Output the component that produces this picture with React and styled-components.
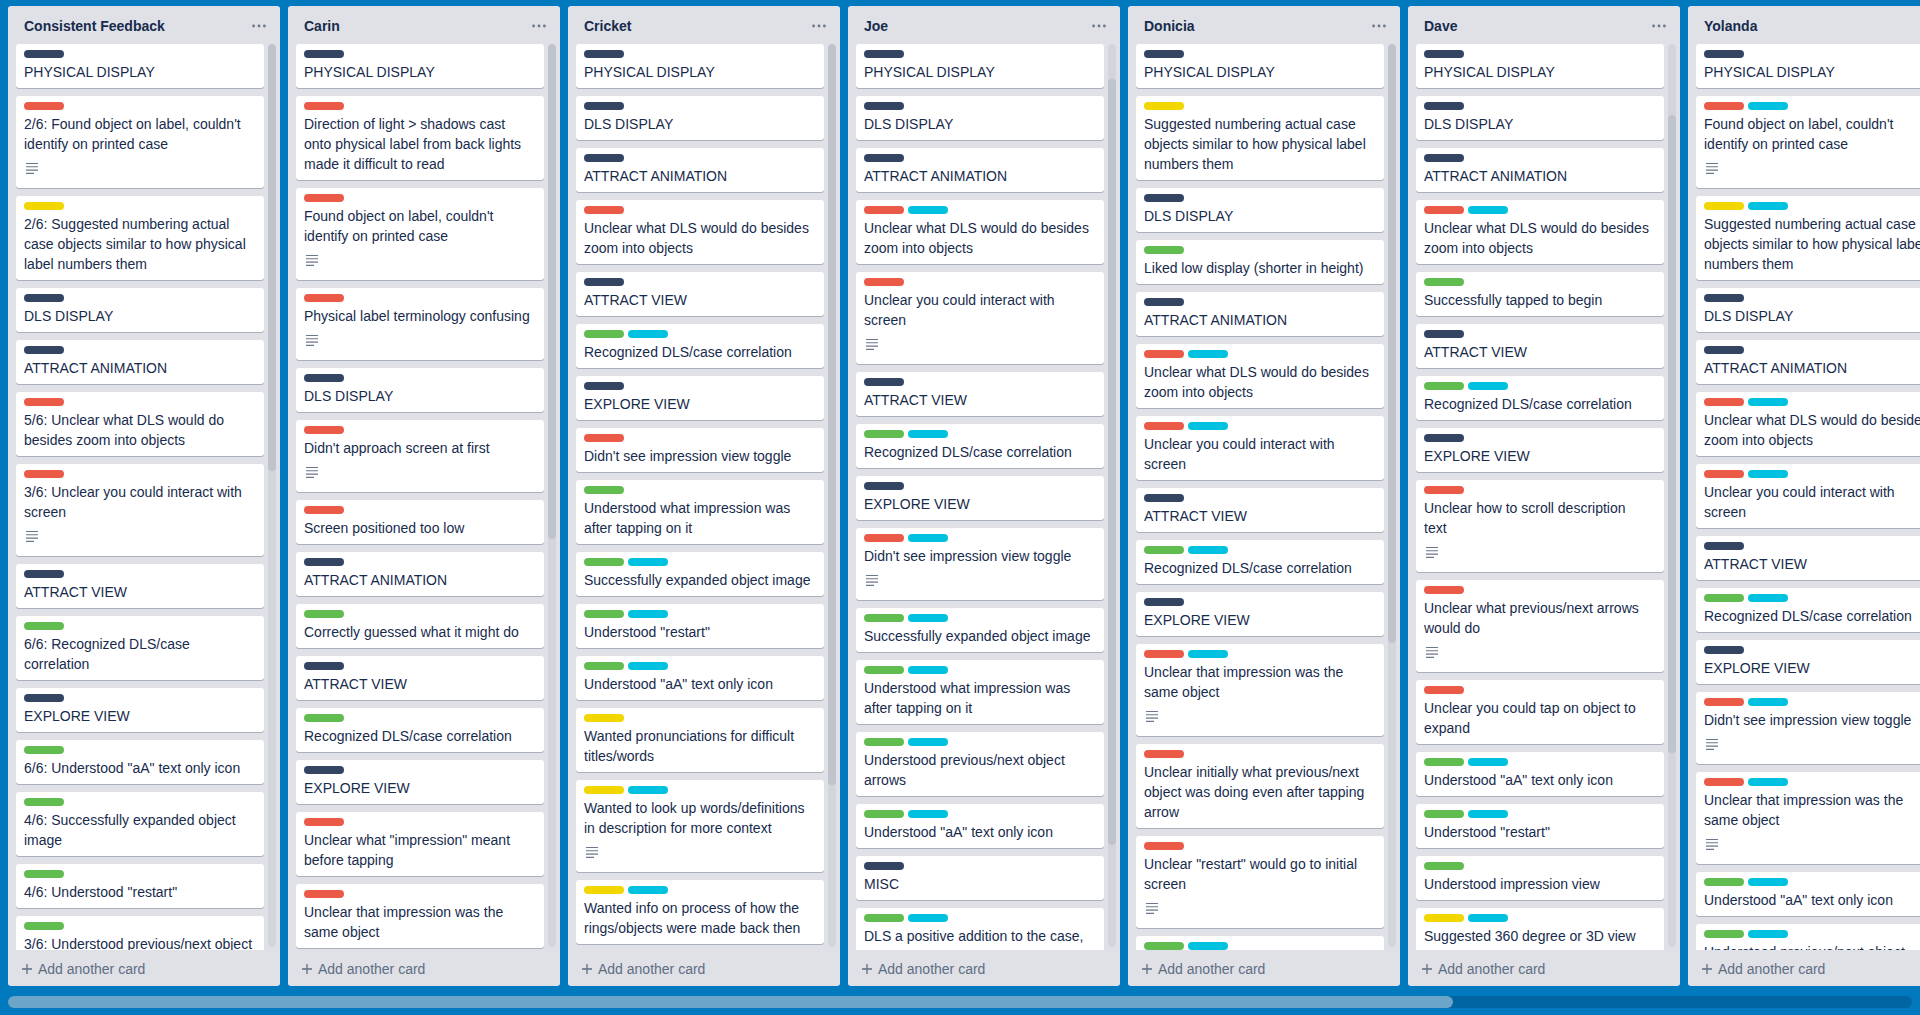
import React from 'react';
import styled, { createGlobalStyle } from 'styled-components';

const GlobalStyle = createGlobalStyle`
  html, body {
    margin: 0;
    padding: 0;
    height: 100%;
    overflow: hidden;
    background: #0079bf;
    font-family: "Liberation Sans", Arial, sans-serif;
  }
  #root {
    height: 100%;
  }
`;

const LABEL_COLORS = {
  d: '#344563',
  r: '#eb5a46',
  y: '#f2d600',
  g: '#61bd4f',
  s: '#00c2e0',
};

// each card: [labels, title, hasDescription]
const lists = [
  {
    name: 'Consistent Feedback',
    thumb: [0, 427],
    cards: [
      ['d', 'PHYSICAL DISPLAY'],
      ['r', "2/6: Found object on label, couldn't identify on printed case", true],
      ['y', '2/6: Suggested numbering actual case objects similar to how physical label numbers them'],
      ['d', 'DLS DISPLAY'],
      ['d', 'ATTRACT ANIMATION'],
      ['r', '5/6: Unclear what DLS would do besides zoom into objects'],
      ['r', '3/6: Unclear you could interact with screen', true],
      ['d', 'ATTRACT VIEW'],
      ['g', '6/6: Recognized DLS/case correlation'],
      ['d', 'EXPLORE VIEW'],
      ['g', '6/6: Understood "aA" text only icon'],
      ['g', '4/6: Successfully expanded object image'],
      ['g', '4/6: Understood "restart"'],
      ['g', '3/6: Understood previous/next object arrows'],
    ],
  },
  {
    name: 'Carin',
    thumb: [0, 495],
    cards: [
      ['d', 'PHYSICAL DISPLAY'],
      ['r', 'Direction of light > shadows cast onto physical label from back lights made it difficult to read'],
      ['r', "Found object on label, couldn't identify on printed case", true],
      ['r', 'Physical label terminology confusing', true],
      ['d', 'DLS DISPLAY'],
      ['r', "Didn't approach screen at first", true],
      ['r', 'Screen positioned too low'],
      ['d', 'ATTRACT ANIMATION'],
      ['g', 'Correctly guessed what it might do'],
      ['d', 'ATTRACT VIEW'],
      ['g', 'Recognized DLS/case correlation'],
      ['d', 'EXPLORE VIEW'],
      ['r', 'Unclear what "impression" meant before tapping'],
      ['r', 'Unclear that impression was the same object'],
    ],
  },
  {
    name: 'Cricket',
    thumb: [0, 741],
    cards: [
      ['d', 'PHYSICAL DISPLAY'],
      ['d', 'DLS DISPLAY'],
      ['d', 'ATTRACT ANIMATION'],
      ['r', 'Unclear what DLS would do besides zoom into objects'],
      ['d', 'ATTRACT VIEW'],
      ['gs', 'Recognized DLS/case correlation'],
      ['d', 'EXPLORE VIEW'],
      ['r', "Didn't see impression view toggle"],
      ['g', 'Understood what impression was after tapping on it'],
      ['gs', 'Successfully expanded object image'],
      ['gs', 'Understood "restart"'],
      ['gs', 'Understood "aA" text only icon'],
      ['y', 'Wanted pronunciations for difficult titles/words'],
      ['ys', 'Wanted to look up words/definitions in description for more context', true],
      ['ys', 'Wanted info on process of how the rings/objects were made back then'],
    ],
  },
  {
    name: 'Joe',
    thumb: [35, 766],
    cards: [
      ['d', 'PHYSICAL DISPLAY'],
      ['d', 'DLS DISPLAY'],
      ['d', 'ATTRACT ANIMATION'],
      ['rs', 'Unclear what DLS would do besides zoom into objects'],
      ['r', 'Unclear you could interact with screen', true],
      ['d', 'ATTRACT VIEW'],
      ['gs', 'Recognized DLS/case correlation'],
      ['d', 'EXPLORE VIEW'],
      ['rs', "Didn't see impression view toggle", true],
      ['gs', 'Successfully expanded object image'],
      ['gs', 'Understood what impression was after tapping on it'],
      ['gs', 'Understood previous/next object arrows'],
      ['gs', 'Understood "aA" text only icon'],
      ['d', 'MISC'],
      ['gs', 'DLS a positive addition to the case, added context to the objects'],
    ],
  },
  {
    name: 'Donicia',
    thumb: [0, 599],
    cards: [
      ['d', 'PHYSICAL DISPLAY'],
      ['y', 'Suggested numbering actual case objects similar to how physical label numbers them'],
      ['d', 'DLS DISPLAY'],
      ['g', 'Liked low display (shorter in height)'],
      ['d', 'ATTRACT ANIMATION'],
      ['rs', 'Unclear what DLS would do besides zoom into objects'],
      ['rs', 'Unclear you could interact with screen'],
      ['d', 'ATTRACT VIEW'],
      ['gs', 'Recognized DLS/case correlation'],
      ['d', 'EXPLORE VIEW'],
      ['rs', 'Unclear that impression was the same object', true],
      ['r', 'Unclear initially what previous/next object was doing even after tapping arrow'],
      ['r', 'Unclear "restart" would go to initial screen', true],
      ['gs', 'Understood "aA" text only icon'],
    ],
  },
  {
    name: 'Dave',
    thumb: [71, 638],
    cards: [
      ['d', 'PHYSICAL DISPLAY'],
      ['d', 'DLS DISPLAY'],
      ['d', 'ATTRACT ANIMATION'],
      ['rs', 'Unclear what DLS would do besides zoom into objects'],
      ['g', 'Successfully tapped to begin'],
      ['d', 'ATTRACT VIEW'],
      ['gs', 'Recognized DLS/case correlation'],
      ['d', 'EXPLORE VIEW'],
      ['r', 'Unclear how to scroll description\ntext', true],
      ['r', 'Unclear what previous/next arrows would do', true],
      ['r', 'Unclear you could tap on object to expand'],
      ['gs', 'Understood "aA" text only icon'],
      ['gs', 'Understood "restart"'],
      ['g', 'Understood impression view'],
      ['ys', 'Suggested 360 degree or 3D view capability'],
    ],
  },
  {
    name: 'Yolanda',
    thumb: [0, 500],
    cards: [
      ['d', 'PHYSICAL DISPLAY'],
      ['rs', "Found object on label, couldn't identify on printed case", true],
      ['ys', 'Suggested numbering actual case objects similar to how physical label numbers them'],
      ['d', 'DLS DISPLAY'],
      ['d', 'ATTRACT ANIMATION'],
      ['rs', 'Unclear what DLS would do besides zoom into objects'],
      ['rs', 'Unclear you could interact with screen'],
      ['d', 'ATTRACT VIEW'],
      ['gs', 'Recognized DLS/case correlation'],
      ['d', 'EXPLORE VIEW'],
      ['rs', "Didn't see impression view toggle", true],
      ['rs', 'Unclear that impression was the same object', true],
      ['gs', 'Understood "aA" text only icon'],
      ['gs', 'Understood previous/next object arrows'],
    ],
  },
];

const Board = styled.div`
  height: 100%;
  display: flex;
  flex-direction: column;
`;

const ListsRow = styled.div`
  flex: 1;
  min-height: 0;
  display: flex;
  gap: 8px;
  padding: 6px 0 0 8px;
  overflow: hidden;
`;

const List = styled.section`
  flex: 0 0 272px;
  display: flex;
  flex-direction: column;
  background: #dfe1e6;
  border-radius: 3px;
`;

const ListHeader = styled.header`
  height: 36px;
  padding: 2px 14px 0 16px;
  display: flex;
  align-items: center;
  justify-content: space-between;
`;

const ListTitle = styled.h2`
  margin: 0;
  font-size: 14px;
  font-weight: 700;
  line-height: 20px;
  color: #172b4d;
`;

const CardsArea = styled.div`
  flex: 1;
  min-height: 0;
  display: flex;
  padding: 0 4px 0 8px;
  gap: 4px;
`;

const CardStack = styled.div`
  width: 248px;
  display: flex;
  flex-direction: column;
  gap: 8px;
  overflow: hidden;
`;

const Track = styled.div`
  position: relative;
  width: 8px;
  margin-bottom: 3px;
  border-radius: 4px;
  background: #d2d6dc;
`;

const Thumb = styled.div`
  position: absolute;
  left: 0;
  right: 0;
  top: ${(p) => p.$top}px;
  height: ${(p) => p.$height}px;
  border-radius: 4px;
  background: #bfc4cc;
`;

const Card = styled.article`
  flex-shrink: 0;
  background: #fff;
  border-radius: 3px;
  box-shadow: 0 1px 0 rgba(9, 30, 66, 0.25);
  padding: 6px 8px 2px;
`;

const Labels = styled.div`
  display: flex;
  gap: 4px;
  margin-bottom: 4px;
`;

const Label = styled.span`
  width: 40px;
  height: 8px;
  border-radius: 4px;
  background: ${(p) => p.$color};
`;

const CardTitle = styled.p`
  margin: 0 0 4px;
  font-size: 14px;
  line-height: 20px;
  color: #172b4d;
  white-space: pre-line;
  word-wrap: break-word;
`;

const Badges = styled.div`
  display: flex;
  margin-bottom: 4px;
`;

const Badge = styled.span`
  display: inline-flex;
  align-items: flex-start;
  height: 20px;
  padding: 2px;
`;

const Footer = styled.button`
  height: 36px;
  display: flex;
  align-items: center;
  gap: 5px;
  padding: 2px 0 0 13px;
  border: 0;
  background: none;
  font-family: inherit;
  font-size: 14px;
  color: #5e6c84;
  text-align: left;
  cursor: pointer;
`;

const HScroll = styled.div`
  position: relative;
  height: 12px;
  margin: 10px 8px 7px;
  border-radius: 6px;
  background: rgba(0, 0, 0, 0.16);
`;

const HThumb = styled.div`
  width: ${(p) => p.$width}px;
  height: 100%;
  border-radius: 6px;
  background: rgba(255, 255, 255, 0.42);
`;

function MoreIcon() {
  return (
    <svg width="14" height="4" viewBox="0 0 14 4">
      <circle cx="1.6" cy="2" r="1.4" fill="#6b778c" />
      <circle cx="7" cy="2" r="1.4" fill="#6b778c" />
      <circle cx="12.4" cy="2" r="1.4" fill="#6b778c" />
    </svg>
  );
}

function DescriptionIcon() {
  return (
    <svg width="14" height="16" viewBox="0 0 14 16">
      <path
        d="M0 3.5h12M0 6.8h12M0 10.1h12M0 13.4h8"
        stroke="#6b778c"
        strokeWidth="1.1"
        fill="none"
      />
    </svg>
  );
}

function PlusIcon() {
  return (
    <svg width="12" height="12" viewBox="0 0 12 12">
      <path d="M6 1v10M1 6h10" stroke="#5e6c84" strokeWidth="1.3" fill="none" />
    </svg>
  );
}

function ListCard({ labels, title, desc }) {
  return (
    <Card>
      <Labels>
        {labels.split('').map((l, i) => (
          <Label key={i} $color={LABEL_COLORS[l]} />
        ))}
      </Labels>
      <CardTitle>{title}</CardTitle>
      {desc && (
        <Badges>
          <Badge>
            <DescriptionIcon />
          </Badge>
        </Badges>
      )}
    </Card>
  );
}

export default function App() {
  return (
    <>
      <GlobalStyle />
      <Board>
        <ListsRow>
          {lists.map((list) => (
            <List key={list.name}>
              <ListHeader>
                <ListTitle>{list.name}</ListTitle>
                <MoreIcon />
              </ListHeader>
              <CardsArea>
                <CardStack>
                  {list.cards.map(([labels, title, desc], i) => (
                    <ListCard key={i} labels={labels} title={title} desc={desc} />
                  ))}
                </CardStack>
                <Track>
                  <Thumb $top={list.thumb[0]} $height={list.thumb[1]} />
                </Track>
              </CardsArea>
              <Footer>
                <PlusIcon />
                Add another card
              </Footer>
            </List>
          ))}
        </ListsRow>
        <HScroll>
          <HThumb $width={1445} />
        </HScroll>
      </Board>
    </>
  );
}
